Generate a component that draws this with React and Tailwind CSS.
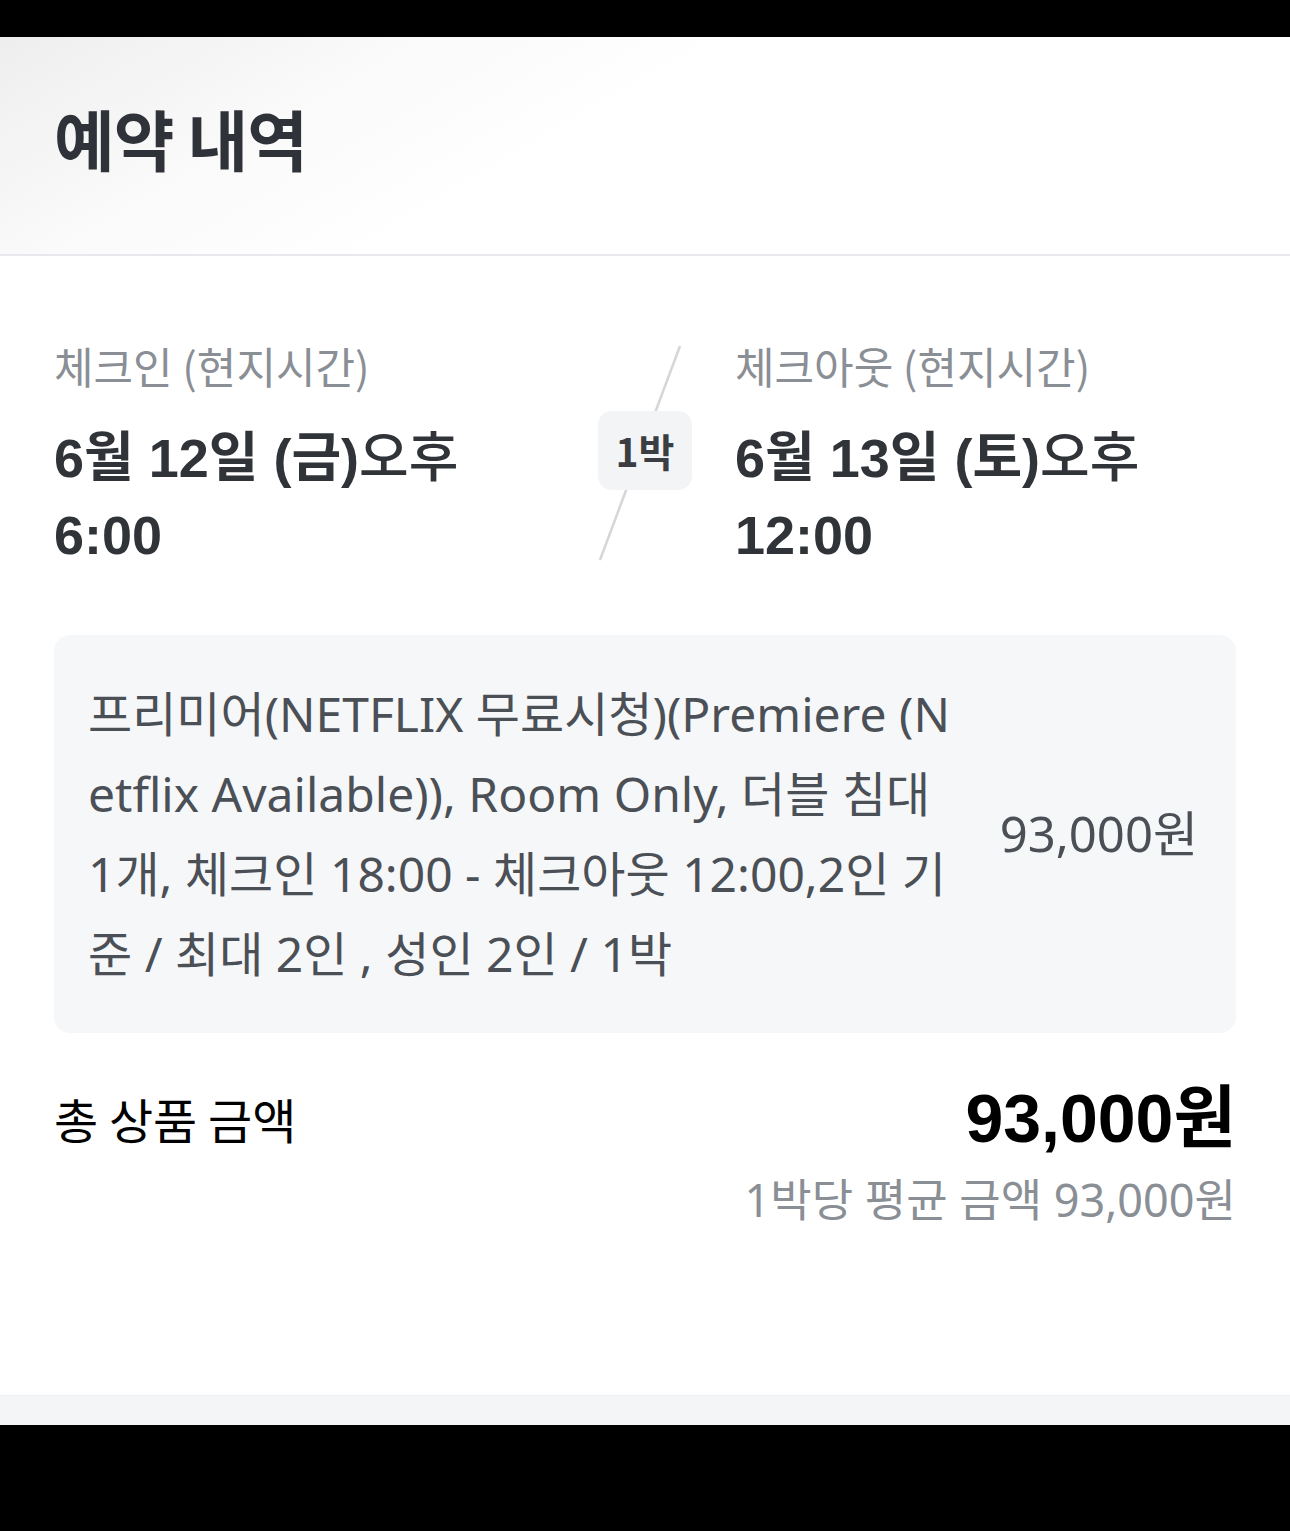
import React from "react";

const KR = { fontFamily: '"Noto Sans CJK KR", sans-serif' };
const MIX = { fontFamily: '"Noto Sans", "Noto Sans CJK KR", sans-serif' };
const BOLDNUM = { fontFamily: '"Liberation Sans", "Noto Sans CJK KR", sans-serif' };

const roomLines = [
  "프리미어(NETFLIX 무료시청)(Premiere (N",
  "etflix Available)), Room Only, 더블 침대",
  "1개, 체크인 18:00 - 체크아웃 12:00,2인 기",
  "준 / 최대 2인 , 성인 2인 / 1박",
];

function DateBlock({ label, date, time }) {
  return (
    <div className="flex flex-col">
      <div className="text-[43px] leading-[60px] text-[#8a8e95]" style={KR}>
        {label}
      </div>
      <div
        className="mt-[20px] text-[54px] leading-[77px] font-bold text-[#303338]"
        style={BOLDNUM}
      >
        <span>{date}</span>
        <span className="font-medium" style={KR}>
          오후
        </span>
        <br />
        <span>{time}</span>
      </div>
    </div>
  );
}

export default function App() {
  return (
    <div className="w-[1290px] bg-white flex flex-col" style={KR}>
      <div className="h-[37px] bg-black" />

      <header className="h-[219px] flex items-center pb-[16px] px-[54px] border-b-2 border-[#e8e9ec] bg-[linear-gradient(150deg,#eeeeef_0%,#fafafa_25%,#ffffff_45%)]">
        <h1 className="text-[66px] font-bold text-[#2f3238] tracking-[-1px]">예약 내역</h1>
      </header>

      <section className="px-[54px] pt-[79px] pb-[170px]">
        <div className="grid grid-cols-[501px_180px_501px]">
          <DateBlock label="체크인 (현지시간)" date="6월 12일 (금)" time="6:00" />
          <div className="relative flex justify-center">
            <svg
              className="absolute left-0 top-0"
              width="180"
              height="234"
              viewBox="0 0 180 234"
            >
              <line x1="125" y1="11" x2="45" y2="225" stroke="#d4d6da" strokeWidth="2.5" />
            </svg>
            <div className="relative mt-[76px] w-[94px] h-[79px] rounded-[14px] bg-[#f3f4f6] flex items-center justify-center text-[39px] font-bold text-[#3a3d42]">
              1박
            </div>
          </div>
          <DateBlock label="체크아웃 (현지시간)" date="6월 13일 (토)" time="12:00" />
        </div>

        <div className="mt-[61px] h-[398px] rounded-[16px] bg-[#f6f7f9] pl-[34px] pr-[38px] flex items-center justify-between">
          <div className="text-[48px] leading-[80px] text-[#4b4f56]" style={MIX}>
            {roomLines.map((line, i) => (
              <div key={i} className="whitespace-nowrap">
                {line}
              </div>
            ))}
          </div>
          <div className="text-[49px] text-[#4b4f56]" style={MIX}>
            93,000원
          </div>
        </div>

        <div className="mt-[50px] flex justify-between items-start">
          <div className="text-[48px] leading-[70px] text-black">총 상품 금액</div>
          <div className="flex flex-col items-end">
            <div className="text-[68px] leading-[70px] font-bold text-black" style={BOLDNUM}>
              93,000원
            </div>
            <div className="mt-[22px] text-[45px] leading-[50px] text-[#8a8e95]" style={MIX}>
              1박당 평균 금액 93,000원
            </div>
          </div>
        </div>
      </section>

      <div className="h-[30px] bg-[#f4f5f7] border-t border-[#eeeff1]" />
      <div className="h-[106px] bg-black" />
    </div>
  );
}
